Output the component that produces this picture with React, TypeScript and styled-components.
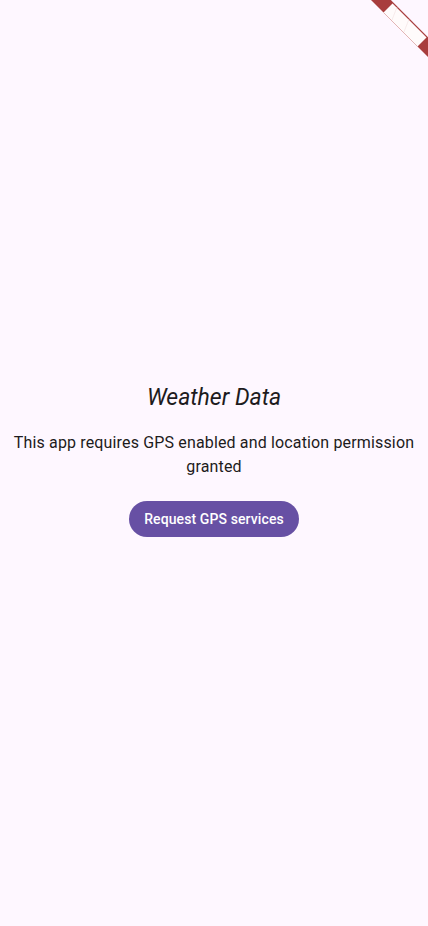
import React from "react";
import styled, { createGlobalStyle } from "styled-components";

const Global = createGlobalStyle`
  html, body { margin: 0; padding: 0; background: #FEF7FF; }
  body { font-family: Roboto, "Noto Sans", sans-serif; -webkit-font-smoothing: antialiased; }
  * { box-sizing: border-box; }
`;

const Screen = styled.div`
  position: relative;
  width: 428px;
  height: 926px;
  overflow: hidden;
  background: #FEF7FF;
  display: flex;
  flex-direction: column;
  align-items: center;
  justify-content: center;
  padding: 0 8px 5px;
`;

const Title = styled.h1`
  margin: 0;
  font-family: Roboto, sans-serif;
  font-style: italic;
  font-weight: 400;
  font-size: 23px;
  line-height: 28px;
  color: #1D1B20;
  text-align: center;
`;

const Body = styled.p`
  margin: 19px 0 0;
  font-family: Roboto, sans-serif;
  font-size: 16px;
  line-height: 24px;
  letter-spacing: 0.15px;
  color: #1D1B20;
  text-align: center;
`;

const PrimaryButton = styled.button`
  margin-top: 22px;
  height: 36px;
  padding: 0 15px;
  border: none;
  border-radius: 18px;
  background: #6750A4;
  color: #FFFFFF;
  font-family: Roboto, sans-serif;
  font-weight: 500;
  font-size: 14px;
  letter-spacing: 0.1px;
  cursor: pointer;
`;

const Banner = styled.svg`
  position: absolute;
  top: 0;
  right: 0;
  width: 60px;
  height: 60px;
  pointer-events: none;
`;

export default function App() {
  return (
    <>
      <Global />
      <Screen>
        <Title>Weather Data</Title>
        <Body>This app requires GPS enabled and location permission granted</Body>
        <PrimaryButton>Request GPS services</PrimaryButton>
        <Banner viewBox="0 0 60 60">
          <polygon points="3,0 22,0 60,38 60,57" fill="#FFFBFB" />
          <polygon points="3,0 22,0 25,3 15.5,12.5" fill="#A83D3D" />
          <polygon points="49.5,46.5 59,37 60,38 60,57" fill="#A83D3D" />
          <line x1="22" y1="0" x2="60" y2="38" stroke="#A83D3D" strokeWidth="1.2" />
          <line x1="15.5" y1="12.5" x2="50" y2="47" stroke="#E2B5B5" strokeWidth="1" />
          <line x1="29" y1="7" x2="24" y2="20" stroke="#F1E0E0" strokeWidth="0.6" />
          <line x1="41" y1="19" x2="36" y2="32" stroke="#F1E0E0" strokeWidth="0.6" />
        </Banner>
      </Screen>
    </>
  );
}
